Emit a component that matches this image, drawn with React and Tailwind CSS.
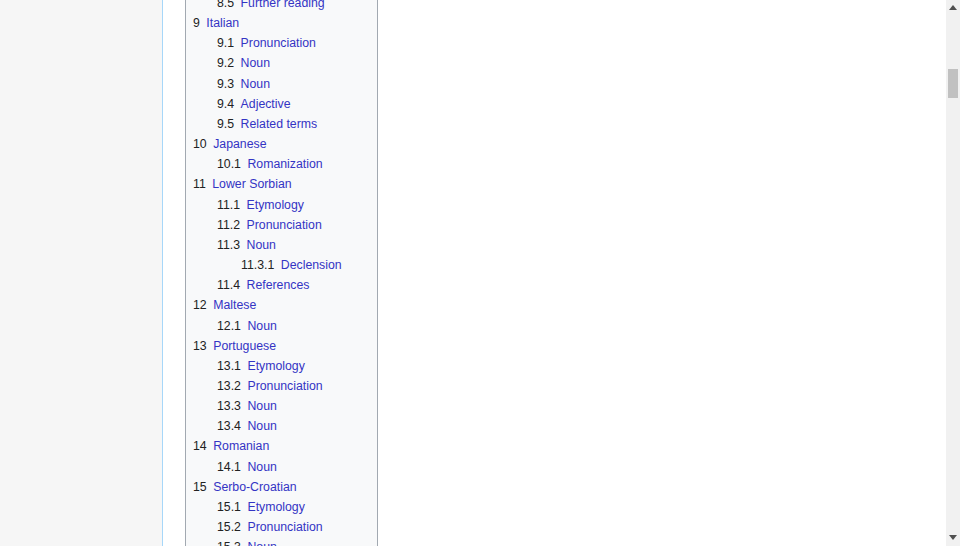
import React from "react"

const items = [
    { n: "8.5", t: "Further reading", l: 2 },
    { n: "9", t: "Italian", l: 1 },
    { n: "9.1", t: "Pronunciation", l: 2 },
    { n: "9.2", t: "Noun", l: 2 },
    { n: "9.3", t: "Noun", l: 2 },
    { n: "9.4", t: "Adjective", l: 2 },
    { n: "9.5", t: "Related terms", l: 2 },
    { n: "10", t: "Japanese", l: 1 },
    { n: "10.1", t: "Romanization", l: 2 },
    { n: "11", t: "Lower Sorbian", l: 1 },
    { n: "11.1", t: "Etymology", l: 2 },
    { n: "11.2", t: "Pronunciation", l: 2 },
    { n: "11.3", t: "Noun", l: 2 },
    { n: "11.3.1", t: "Declension", l: 3 },
    { n: "11.4", t: "References", l: 2 },
    { n: "12", t: "Maltese", l: 1 },
    { n: "12.1", t: "Noun", l: 2 },
    { n: "13", t: "Portuguese", l: 1 },
    { n: "13.1", t: "Etymology", l: 2 },
    { n: "13.2", t: "Pronunciation", l: 2 },
    { n: "13.3", t: "Noun", l: 2 },
    { n: "13.4", t: "Noun", l: 2 },
    { n: "14", t: "Romanian", l: 1 },
    { n: "14.1", t: "Noun", l: 2 },
    { n: "15", t: "Serbo-Croatian", l: 1 },
    { n: "15.1", t: "Etymology", l: 2 },
    { n: "15.2", t: "Pronunciation", l: 2 },
    { n: "15.3", t: "Noun", l: 2 },
]

const indent = { 1: "pl-0", 2: "pl-[24px]", 3: "pl-[48px]" }

const App = () => {
    return (
        <div className="flex h-[546px] w-[960px] overflow-hidden bg-white" style={{ fontFamily: '"Liberation Sans", Arial, sans-serif' }}>
            {/* panneau gauche */}
            <div className="w-[163px] shrink-0 bg-[#f6f6f6] border-r border-[#a7d7f9]"></div>

            {/* contenu */}
            <div className="flex-1 pl-[22px]">
                <div className="w-[193px] -mt-[8px] min-h-[600px] bg-[#f8f9fa] border border-[#a2a9b1] px-[7px] text-[12.3px]">
                    <ul>
                        {items.map((it, i) => (
                            <li key={i} className={`${indent[it.l]} h-[20.17px] leading-[20.17px] whitespace-nowrap`}>
                                <span className="text-[#222222] pr-[6.5px]">{it.n}</span>
                                <a className="text-[#3434c4]">{it.t}</a>
                            </li>
                        ))}
                    </ul>
                </div>
            </div>

            {/* barre de défilement */}
            <div className="w-[14px] shrink-0 bg-[#f1f1f1] flex flex-col items-center">
                <div className="pt-[5px] h-[14px]">
                    <svg width="8" height="5" viewBox="0 0 8 5"><path d="M0 5 L4 0 L8 5 Z" fill="#505050" /></svg>
                </div>
                <div className="mt-[55px] w-[10px] h-[29px] bg-[#c1c1c1]"></div>
                <div className="flex-1"></div>
                <div className="pb-[6px] h-[14px] flex items-end">
                    <svg width="8" height="5" viewBox="0 0 8 5"><path d="M0 0 L8 0 L4 5 Z" fill="#505050" /></svg>
                </div>
            </div>
        </div>
    )
}

export default App
